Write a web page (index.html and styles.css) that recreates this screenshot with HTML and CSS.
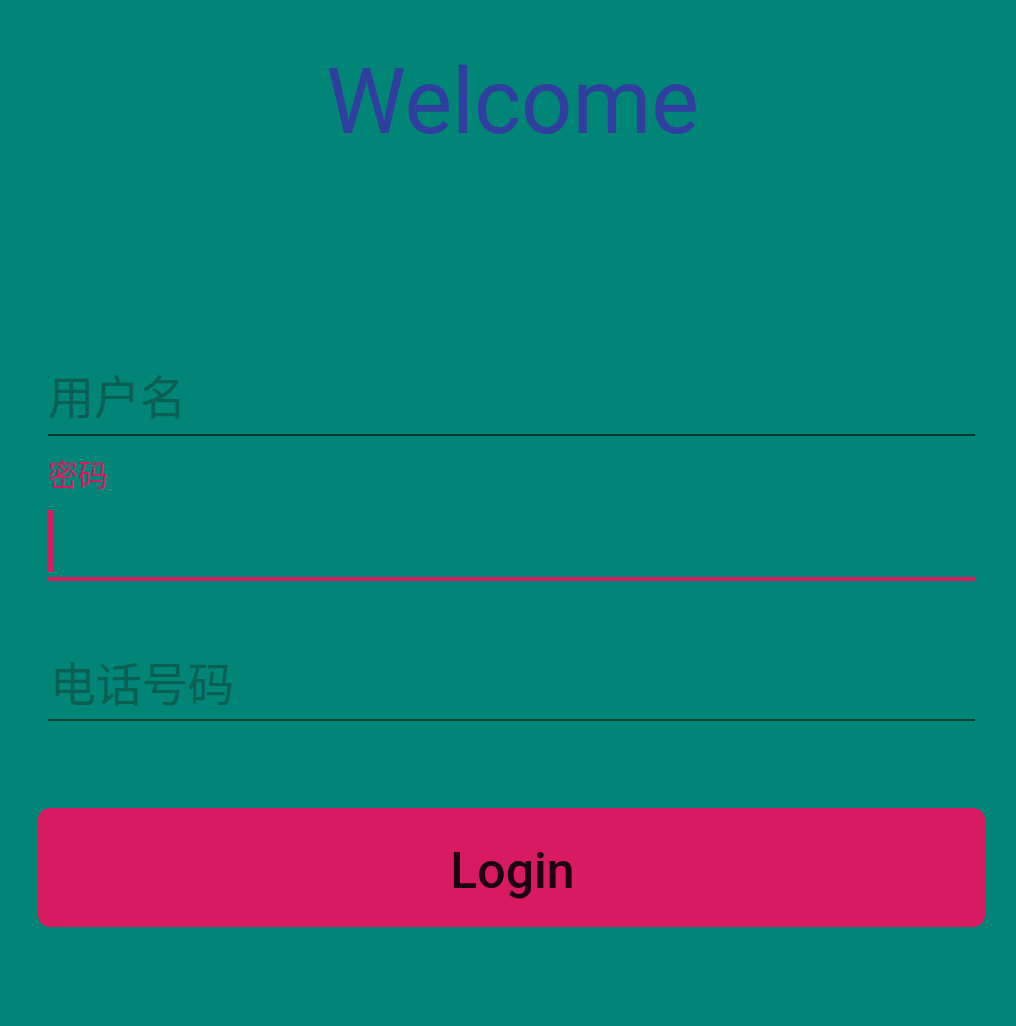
FILE: index.html
```html
<!DOCTYPE html>
<html lang="zh">
<head>
<meta charset="utf-8">
<title>Login</title>
<link rel="stylesheet" href="styles.css">
</head>
<body>
<main class="screen">
  <h1 class="title">Welcome</h1>
  <div class="form">
    <div class="field field-user">
      <div class="hint">用户名</div>
    </div>
    <div class="field field-pass">
      <div class="label">密码</div>
      <div class="input-area"><span class="cursor"></span></div>
    </div>
    <div class="field field-phone">
      <div class="hint">电话号码</div>
    </div>
  </div>
  <button class="login" type="button">Login</button>
</main>
</body>
</html>
```

FILE: styles.css
```css
html, body {
  margin: 0;
  padding: 0;
  background: #008577;
}
.screen {
  width: 1016px;
  height: 1026px;
  background: #008577;
  display: flex;
  flex-direction: column;
  font-family: Roboto, "Noto Sans CJK SC", sans-serif;
}
.title {
  margin: 58px 0 0 0;
  padding-left: 9px;
  height: 90px;
  line-height: 90px;
  font-size: 90px;
  font-weight: 400;
  text-align: center;
  color: #303f9f;
  font-family: Roboto, sans-serif;
}
.form {
  display: flex;
  flex-direction: column;
  padding: 0 41px 0 48px;
  margin-top: 7px;
}
.field {
  display: flex;
  flex-direction: column;
}
.hint {
  font-family: "Noto Sans CJK SC", sans-serif;
  font-size: 46px;
  line-height: 52px;
  height: 52px;
  color: #0b5e53;
  border-bottom: 2px solid #003b34;
}
.field-user {
  margin-top: 213px;
}
.field-user .hint {
  padding-bottom: 14px;
}
.field-pass {
  margin-top: 19px;
}
.label {
  font-family: "Noto Sans CJK SC", sans-serif;
  font-size: 30px;
  line-height: 36px;
  height: 36px;
  color: #d81b60;
}
.input-area {
  display: flex;
  padding: 19px 0 5px 0;
  border-bottom: 4px solid #d81b60;
}
.cursor {
  display: block;
  width: 5px;
  height: 62px;
  background: #d81b60;
}
.field-phone {
  margin-top: 74px;
}
.field-phone .hint {
  padding-bottom: 12px;
  padding-left: 2px;
}
.login {
  margin: 87px 31px 0 38px;
  height: 119px;
  border: none;
  border-radius: 12px;
  background: #d81b60;
  color: #1c0010;
  font-family: Roboto, sans-serif;
  font-weight: 500;
  font-size: 50px;
  display: flex;
  align-items: center;
  justify-content: center;
  padding: 6px 0 0 2px;
}
```
